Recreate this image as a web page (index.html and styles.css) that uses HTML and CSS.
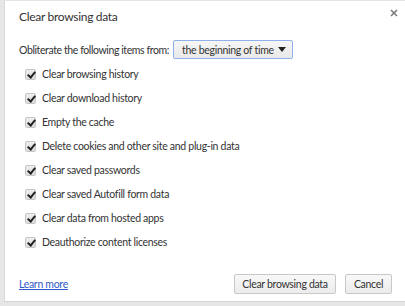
FILE: index.html
```html
<!DOCTYPE html>
<html>
<head>
<meta charset="utf-8">
<link rel="stylesheet" href="styles.css">
</head>
<body>
<div class="dialog">
  <div class="header">
    <div class="title">Clear browsing data</div>
    <button class="close" aria-label="Close">
      <svg width="8" height="8" viewBox="0 0 8 8"><path d="M1 1L7 7M7 1L1 7" stroke="#7a7a7a" stroke-width="1.6"/></svg>
    </button>
  </div>
  <div class="period">
    <span class="period-label">Obliterate the following items from:</span>
    <div class="select"><span>the beginning of time</span><span class="arrow"></span></div>
  </div>
  <ul class="items">
    <li><span class="cb"></span>Clear browsing history</li>
    <li><span class="cb"></span>Clear download history</li>
    <li><span class="cb"></span>Empty the cache</li>
    <li><span class="cb"></span>Delete cookies and other site and plug-in data</li>
    <li><span class="cb"></span>Clear saved passwords</li>
    <li><span class="cb"></span>Clear saved Autofill form data</li>
    <li><span class="cb"></span>Clear data from hosted apps</li>
    <li><span class="cb"></span>Deauthorize content licenses</li>
  </ul>
  <div class="footer">
    <a class="learn" href="#">Learn more</a>
    <div class="buttons">
      <button class="btn btn-main">Clear browsing data</button>
      <button class="btn btn-cancel">Cancel</button>
    </div>
  </div>
</div>
</body>
</html>
```

FILE: styles.css
```css
html, body {
  margin: 0;
  padding: 0;
  background: #e6e6e6;
  width: 405px;
  height: 306px;
  overflow: hidden;
}
body {
  padding-left: 4px;
  box-sizing: border-box;
  font-family: Lato, "Open Sans", sans-serif;
  font-size: 10.5px;
  letter-spacing: -0.3px;
  color: #333;
}
.dialog {
  background: #fff;
  width: 401px;
  height: 302px;
  box-sizing: border-box;
  border-top: 1px solid #e4e4e4;
  border-left: 1px solid #dadada;
  border-bottom: 1px solid #d4d4d4;
  padding: 0 13px 0 14px;
  display: flex;
  flex-direction: column;
  white-space: nowrap;
}
.header {
  display: flex;
  justify-content: space-between;
  height: 32px;
  align-items: flex-start;
}
.title {
  font-size: 12px;
  letter-spacing: -0.3px;
  color: #333;
  margin-top: 8px;
}
.close {
  border: 0;
  background: none;
  padding: 0;
  margin-top: 8px;
  margin-right: -6px;
  width: 8px;
  height: 8px;
  display: flex;
}
.period {
  display: flex;
  align-items: center;
  gap: 4px;
  height: 19px;
  margin-top: 7px;
}
.period-label {
  letter-spacing: -0.4px;
}
.select {
  display: flex;
  align-items: center;
  justify-content: space-between;
  box-sizing: border-box;
  width: 120px;
  height: 19px;
  border: 1px solid #8fb0e8;
  border-radius: 2px;
  background: linear-gradient(#f6f6f6, #e9e9e9);
  padding: 0 6px 0 8px;
  color: #333;
}
.arrow {
  width: 0;
  height: 0;
  border-left: 4px solid transparent;
  border-right: 4px solid transparent;
  border-top: 5px solid #222;
}
.items {
  list-style: none;
  margin: 3px 0 0 0;
  padding: 0 0 0 6px;
}
.items li {
  display: flex;
  align-items: center;
  height: 24px;
  gap: 6px;
}
.cb {
  position: relative;
  width: 11px;
  height: 11px;
  box-sizing: border-box;
  border: 1px solid #c6c6c6;
  border-radius: 2px;
  background: linear-gradient(#eeeeee, #dcdcdc);
}
.cb::after {
  content: "";
  position: absolute;
  left: 3px;
  top: 0px;
  width: 3px;
  height: 6px;
  border-right: 2px solid #222;
  border-bottom: 2px solid #222;
  transform: rotate(40deg);
}
.footer {
  margin-top: auto;
  margin-bottom: 7px;
  display: flex;
  align-items: center;
  justify-content: space-between;
}
.learn {
  color: #3058c8;
  text-decoration: underline;
}
.buttons {
  display: flex;
  gap: 9px;
}
.btn {
  font-family: inherit;
  font-size: 10.5px;
  letter-spacing: -0.3px;
  color: #333;
  height: 20px;
  padding: 0 6px;
  border: 1px solid #c8c8c8;
  border-radius: 2px;
  background: linear-gradient(#f8f8f8, #ececec);
}
.btn-main { width: 102px; }
.btn-cancel { width: 47px; }
```
